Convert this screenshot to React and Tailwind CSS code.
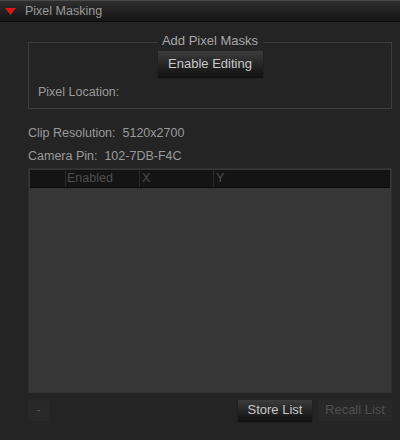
import React from "react";

const font = { fontFamily: '"Liberation Sans", Arial, sans-serif' };

function GradButton({ children, className = "" }) {
    return (
        <div className={`flex items-center justify-center bg-gradient-to-b from-[#3c3c3c] to-[#121212] text-[#c8c8c8] text-[13px] shadow-[0_1px_1px_rgba(0,0,0,0.5)] ${className}`}>
            {children}
        </div>
    );
}

export default function App() {
    return (
        <div className="w-[400px] h-[440px] bg-[#242424] overflow-hidden flex flex-col" style={font}>
            <div className="h-[22px] shrink-0 border-t border-t-[#4a4a4a] border-b border-b-[#0c0c0c] bg-gradient-to-b from-[#2e2e2e] to-[#151515] flex items-center pl-[5px]">
                <svg width="11" height="7" viewBox="0 0 11 7" className="mt-[1px]">
                    <polygon points="0,0 11,0 5.5,7" fill="#e01616" />
                </svg>
                <span className="ml-[9px] text-[12.5px] text-[#9a9a9a]">Pixel Masking</span>
            </div>

            <div className="flex flex-col pl-[28px] pr-[8px]">
                <div className="relative mt-[20px] h-[67px] border border-[#3c3c3c] flex flex-col">
                    <div className="absolute -top-[10px] left-0 right-0 flex justify-center">
                        <span className="bg-[#242424] px-[5px] text-[13px] leading-[16px] text-[#a8a8a8]">Add Pixel Masks</span>
                    </div>
                    <div className="flex justify-center mt-[8px]">
                        <GradButton className="w-[105px] h-[26px]">Enable Editing</GradButton>
                    </div>
                    <div className="ml-[9px] mt-[6px] text-[12.5px] text-[#9a9a9a]">Pixel Location:</div>
                </div>

                <div className="mt-[16px] text-[12.5px] leading-[16px] text-[#9a9a9a]">Clip Resolution:&nbsp; 5120x2700</div>
                <div className="mt-[7px] text-[12.5px] leading-[16px] text-[#9a9a9a]">Camera Pin:&nbsp; 102-7DB-F4C</div>

                <div className="mt-[4px] h-[225px] border border-[#303030] p-[1px] flex flex-col bg-[#363636]">
                    <div className="h-[18px] shrink-0 bg-[#141414] border-b border-[#0a0a0a] flex text-[12.5px] text-[#4e4e4e] leading-[17px]">
                        <div className="w-[36px] border-r border-[#2a2a2a]" />
                        <div className="w-[74px] pl-[1px] border-r border-[#2a2a2a]">Enabled</div>
                        <div className="w-[74px] pl-[2px] border-r border-[#2a2a2a]">X</div>
                        <div className="flex-1 pl-[2px]">Y</div>
                    </div>
                    <div className="flex-1" />
                </div>

                <div className="mt-[6px] flex items-center h-[22px]">
                    <div className="w-[21px] h-[21px] bg-[#282828] text-[#555] text-[12px] flex items-center justify-center">-</div>
                    <div className="flex-1" />
                    <GradButton className="w-[74px] h-[21px]">Store List</GradButton>
                    <div className="w-[74px] h-[21px] ml-[6px] bg-[#282828] text-[#505050] text-[13px] flex items-center justify-center">Recall List</div>
                </div>
            </div>
        </div>
    );
}
